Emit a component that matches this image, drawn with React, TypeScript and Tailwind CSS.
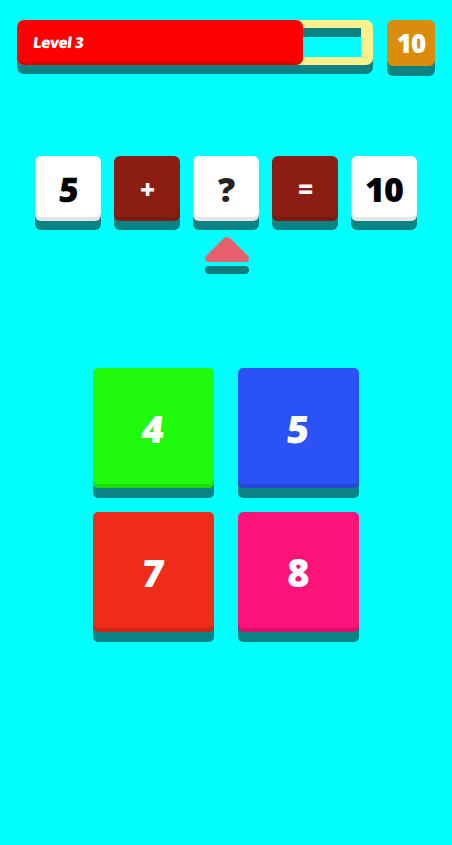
const font = { fontFamily: '"Open Sans", "Lato", "Liberation Sans", sans-serif' };

const equation = [
  { label: '5', face: 'bg-white text-black', dark: false, slant: true },
  { label: '+', face: 'bg-[#8b1d13] text-white', dark: true, slant: false },
  { label: '?', face: 'bg-white text-[#222]', dark: false, slant: false },
  { label: '=', face: 'bg-[#8b1d13] text-white', dark: true, slant: false },
  { label: '10', face: 'bg-white text-black', dark: false, slant: false },
];

const answers = [
  { label: '4', face: 'bg-[#20fa0c]', slant: true },
  { label: '5', face: 'bg-[#2b52f5]', slant: true },
  { label: '7', face: 'bg-[#ef2b1a]', slant: true },
  { label: '8', face: 'bg-[#fb137a]', slant: false },
];

export default function App() {
  return (
    <div className="w-[452px] h-[845px] bg-[#00ffff] overflow-hidden" style={font}>
      {/* top bar */}
      <div className="flex items-start gap-[14px] px-[17px] pt-[20px]">
        <div className="relative flex-1 h-[45px] rounded-[7px] bg-[#fdf18e] shadow-[0_9px_0_#0b8383] p-[8px] pr-[12px]">
          <div className="h-full w-full bg-[#00ffff] shadow-[inset_0_9px_0_#0b8383]" />
          <div className="absolute left-0 top-0 h-[45px] w-[286px] rounded-[7px] bg-[#ff0000] shadow-[inset_0_-3px_0_rgba(0,0,0,0.12)] flex items-center pl-[16px]">
            <span className="text-white text-[15px] font-extrabold -skew-x-6 tracking-[-0.5px]">Level 3</span>
          </div>
        </div>
        <div className="w-[48px] h-[46px] rounded-[6px] bg-[#dc8c0c] shadow-[0_10px_0_#0b8383] flex items-center justify-center">
          <span className="text-white text-[26px] font-extrabold leading-none tracking-[-1px]">10</span>
        </div>
      </div>

      {/* equation */}
      <div className="mt-[90px] flex justify-center gap-[13px]">
        {equation.map((t, i) => (
          <div
            key={i}
            className={`w-[66px] h-[65px] rounded-[6px] flex items-center justify-center shadow-[inset_0_-4px_0_rgba(0,0,0,0.1),0_9px_0_#0b8383] ${t.face}`}
          >
            <span
              className={`${t.dark ? 'text-[26px]' : 'text-[34px]'} ${t.slant ? '-skew-x-6' : ''} font-extrabold leading-none tracking-[-1px]`}
            >
              {t.label}
            </span>
          </div>
        ))}
      </div>

      {/* pointer */}
      <div className="mt-[15px] flex flex-col items-center gap-[3px] pl-[2px]">
        <svg width="46" height="27" viewBox="0 0 46 27">
          <path d="M19 3 Q23 -1 27 3 L44 20 Q47 25 41 26 L5 26 Q-1 25 2 20 Z" fill="#e75f6d" />
        </svg>
        <div className="w-[44px] h-[8px] rounded-full bg-[#0b7b7b]" />
      </div>

      {/* answers */}
      <div className="mt-[94px] grid grid-cols-[121px_121px] gap-x-[24px] gap-y-[24px] justify-center">
        {answers.map((a, i) => (
          <div
            key={i}
            className={`w-[121px] h-[120px] rounded-[5px] flex items-center justify-center shadow-[inset_0_-4px_0_rgba(0,0,0,0.12),0_10px_0_#0b8383] ${a.face}`}
          >
            <span className={`text-white text-[38px] font-extrabold leading-none ${a.slant ? '-skew-x-6' : ''}`}>
              {a.label}
            </span>
          </div>
        ))}
      </div>
    </div>
  );
}
